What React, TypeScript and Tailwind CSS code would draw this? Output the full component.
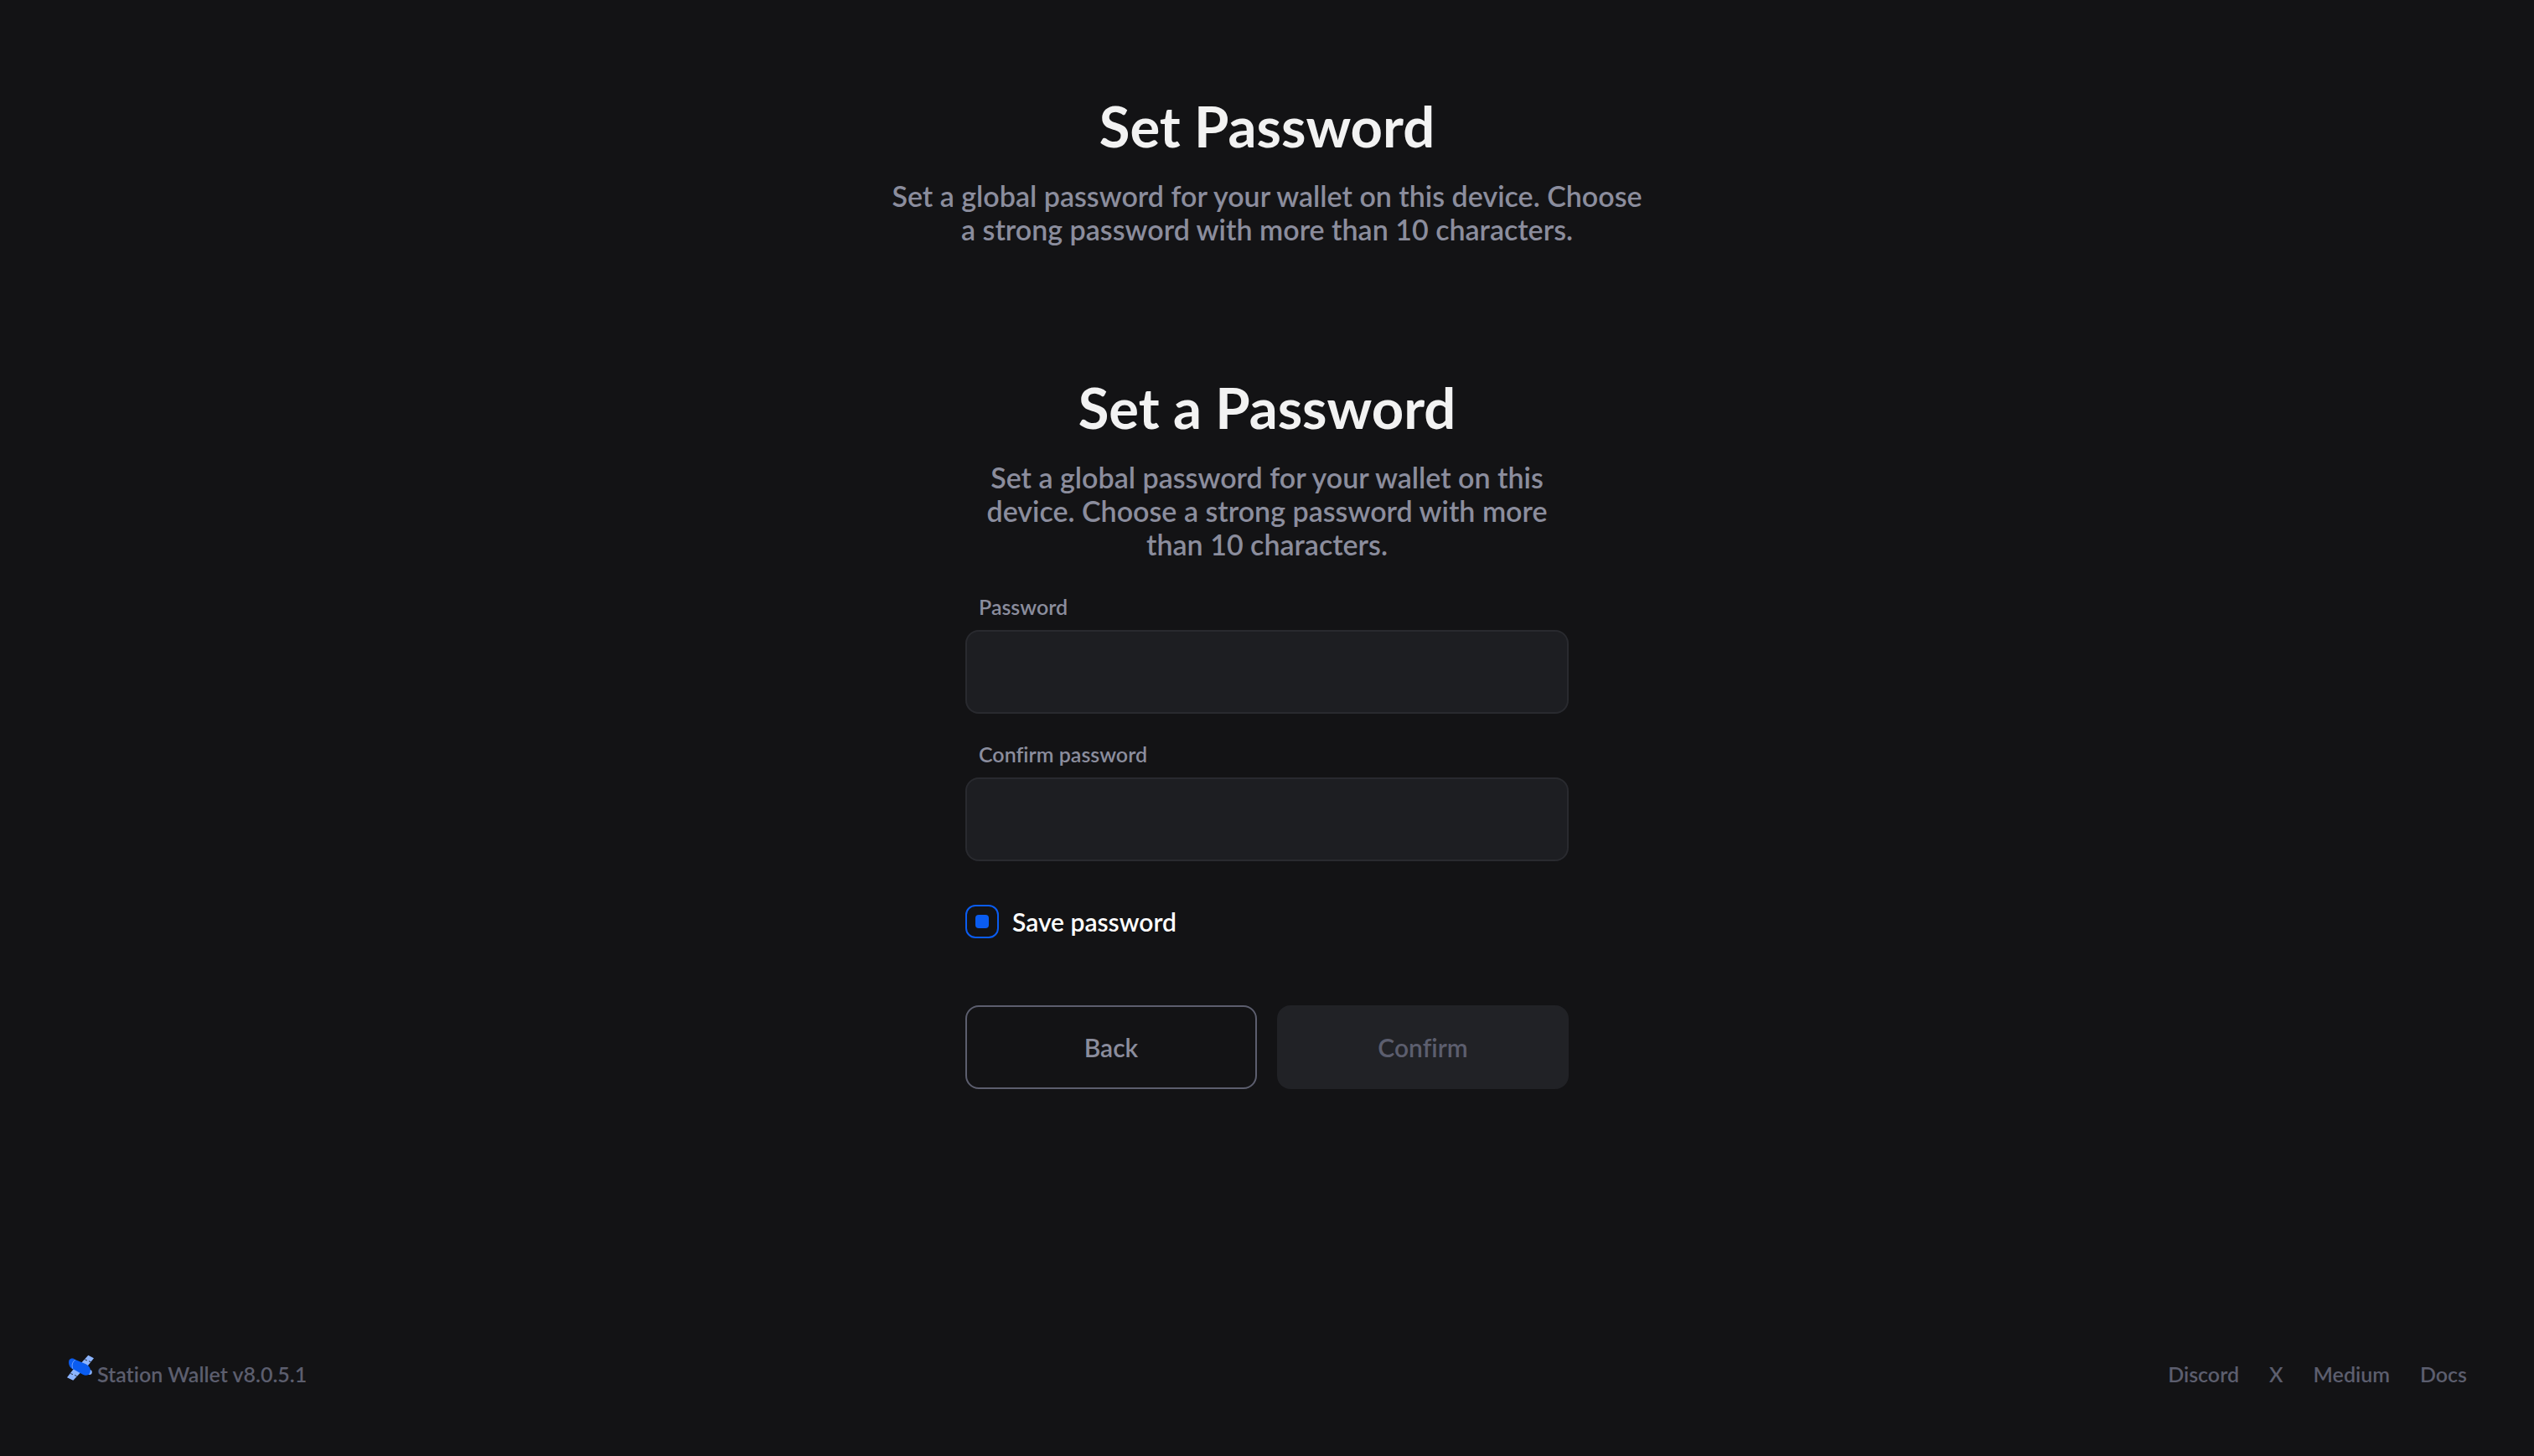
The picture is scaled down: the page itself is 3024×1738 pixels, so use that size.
import { useState } from "react";

const intro =
  "Set a global password for your wallet on this device. Choose a strong password with more than 10 characters.";

const links = ["Discord", "X", "Medium", "Docs"];

function StationLogo() {
  return (
    <svg viewBox="0 0 32 32" className="size-8" aria-hidden="true">
      <path fill="#8cb4ff" d="M25.3 1.7 32 5.3 24.6 14.6 16.4 11.4ZM9 16.5 17.5 21 7.3 31.8 0 28.3Z" />
      <path stroke="#131315" strokeWidth=".8" fill="none" d="M21.2 6.8 24 8M26 8.8 28.6 9.8M4.2 23.6 7 24.6M9 25.5 11.6 26.6" />
      <circle cx="26.8" cy="22.1" r="3" fill="#8cb4ff" />
      <path
        fill="#0a5cf0"
        d="M2.6 7.2C4.6 4.9 7.8 5.1 9.8 7.1L22.5 12.2C26.8 14.3 29 18.6 27.4 22.4 26.2 25.8 22.4 26.4 18.8 24.8L8.2 18.8C3.6 17.8.8 12 2.6 7.2Z"
      />
      <path stroke="#8cb4ff" strokeWidth=".8" fill="none" d="M9.8 7.2C6.4 9.6 5.2 13.4 6.8 17.8" />
    </svg>
  );
}

function Heading({ title }: { title: string }) {
  return (
    <header className="flex flex-col items-center gap-7 text-center">
      <h1 className="text-[67px] leading-[72px] font-bold text-[#f2f2f2]">{title}</h1>
      <p className="text-[34px] leading-10 font-semibold">{intro}</p>
    </header>
  );
}

function PasswordField({ id, label }: { id: string; label: string }) {
  return (
    <div className="flex flex-col gap-3">
      <label htmlFor={id} className="px-4 text-[25px] leading-8 font-semibold">
        {label}
      </label>
      <input
        id={id}
        type="password"
        className="h-[100px] w-full rounded-2xl border-2 border-[#292a2f] bg-[#1d1e22] px-8 text-[30px] text-white outline-none focus:border-[#0a5cf0]"
      />
    </div>
  );
}

export default function App() {
  const [save, setSave] = useState(true);
  return (
    <div className="flex min-h-screen flex-col bg-[#131315] font-['Lato',sans-serif] text-[#8b8d9d] [font-variant-ligatures:none]">
      <main className="flex flex-1 flex-col items-center gap-[156px] pt-[114px]">
        <div className="w-full max-w-[920px]">
          <Heading title="Set Password" />
        </div>
        <form className="flex w-full max-w-[720px] flex-col" onSubmit={(e) => e.preventDefault()}>
          <Heading title="Set a Password" />
          <div className="mt-[38px] flex flex-col gap-8">
            <PasswordField id="password" label="Password" />
            <PasswordField id="confirm" label="Confirm password" />
          </div>
          <label className="mt-[52px] flex items-center gap-4 self-start text-[30px] leading-10 font-semibold text-white">
            <input
              type="checkbox"
              checked={save}
              onChange={(e) => setSave(e.target.checked)}
              className="grid size-10 appearance-none place-items-center rounded-xl border-2 border-[#0a5cf0] before:size-4 before:rounded-sm checked:before:bg-[#0a5cf0]"
            />
            Save password
          </label>
          <div className="mt-20 grid grid-cols-2 gap-6 text-[30px] font-semibold">
            <button type="button" className="h-[100px] rounded-2xl border-2 border-[#5c5e6e]">
              Back
            </button>
            <button type="submit" disabled className="h-[100px] rounded-2xl bg-[#212226] text-[#5c5e6e]">
              Confirm
            </button>
          </div>
        </form>
      </main>
      <footer className="flex items-start justify-between px-20 pb-[82px] text-[25px] leading-8 font-semibold text-[#5c5e6e]">
        <div className="flex items-start gap-1">
          <StationLogo />
          <span className="pt-2">Station Wallet v8.0.5.1</span>
        </div>
        <nav className="flex gap-9 pt-2">
          {links.map((l) => (
            <a key={l} href="#">
              {l}
            </a>
          ))}
        </nav>
      </footer>
    </div>
  );
}
